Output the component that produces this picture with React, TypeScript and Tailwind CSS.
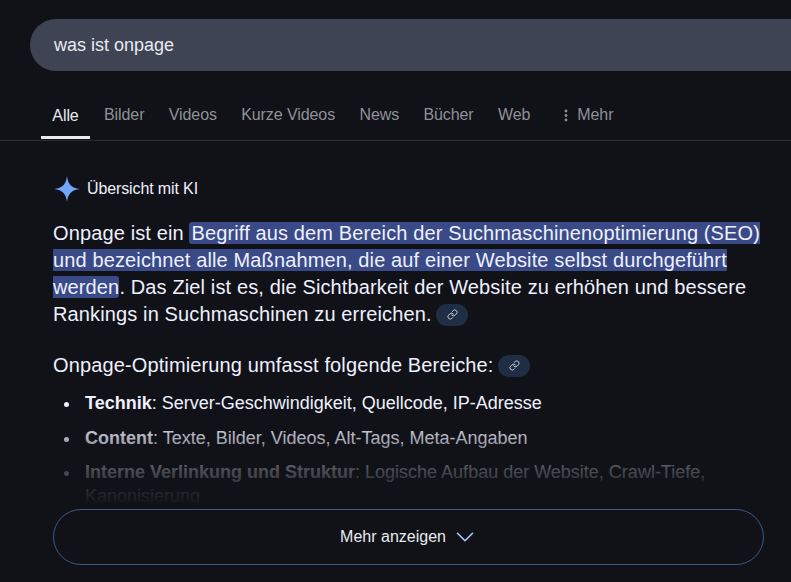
import { ChevronDown, Link } from "lucide-react";

const tabs = ["Bilder", "Videos", "Kurze Videos", "News", "Bücher", "Web"];

const bullets = [
  { title: "Technik", text: "Server-Geschwindigkeit, Quellcode, IP-Adresse" },
  { title: "Content", text: "Texte, Bilder, Videos, Alt-Tags, Meta-Angaben" },
  { title: "Interne Verlinkung und Struktur", text: "Logische Aufbau der Website, Crawl-Tiefe, Kanonisierung" },
];

// kleines Link-Badge hinter den Absätzen
function LinkChip() {
  return (
    <span className="inline-flex items-center justify-center w-[32px] h-[22px] rounded-full bg-[#1f2e44] align-[1px] ml-[-1px]">
      <Link size={11} strokeWidth={2} className="text-[#d5d9e0]" />
    </span>
  );
}

export default function App() {
  return (
    <div className="relative w-[791px] h-[582px] overflow-hidden bg-[#111218] text-[#eef0ff] font-['Liberation_Sans',Arial,sans-serif]">
      {/* Suchleiste */}
      <div className="pt-[19px] pl-[30px]">
        <div className="h-[52px] rounded-l-[26px] bg-[#3f4454] flex items-center pl-[24px] text-[18px] text-[#e8eaed]">
          was ist onpage
        </div>
      </div>

      {/* Tabs */}
      <div className="mt-[22px] h-[48px] pl-[41px] flex items-start border-b border-[#2d2e33] text-[16px] tracking-[-0.08px] text-[#8f9197]">
        <div className="relative w-[49px] h-[47px] pt-[11px] text-center text-[#e8eaed]">
          Alle
          <span className="absolute left-0 right-0 bottom-[1px] h-[3px] bg-[#e8eaed]"></span>
        </div>
        <div className="flex gap-[24.3px] pl-[14px] pt-[10px]">
          {tabs.map((t) => (
            <span key={t}>{t}</span>
          ))}
        </div>
        <div className="flex items-center gap-[9px] pl-[34px] pt-[10px]">
          <svg width="4" height="14" viewBox="0 0 4 14" className="text-[#8f9197]">
            <circle cx="2" cy="3" r="1.4" fill="currentColor" />
            <circle cx="2" cy="7.5" r="1.4" fill="currentColor" />
            <circle cx="2" cy="12" r="1.4" fill="currentColor" />
          </svg>
          <span>Mehr</span>
        </div>
      </div>

      {/* KI Übersicht */}
      <div className="relative pl-[53px] pr-[28px]">
        <div className="flex items-center gap-[6px] pt-[34px] h-[62px] text-[16px] tracking-[-0.12px]">
          <svg width="28" height="28" viewBox="0 0 28 28">
            <path d="M14 1 C15 9 18 13 27 14 C18 15 15 19 14 27 C13 19 10 15 1 14 C10 13 13 9 14 1 Z" fill="#6ea8fe" />
          </svg>
          <span>Übersicht mit KI</span>
        </div>

        <p className="mt-[17px] text-[20px] leading-[27px] tracking-[0.13px]">
          Onpage ist ein{" "}
          <mark className="bg-[#394a86] text-[#eef0ff] rounded-[3px] pl-[2px]">
            Begriff aus dem Bereich der Suchmaschinenoptimierung (SEO) und bezeichnet alle Maßnahmen, die auf einer Website selbst durchgeführt werden
          </mark>
          . Das Ziel ist es, die Sichtbarkeit der Website zu erhöhen und bessere Rankings in Suchmaschinen zu erreichen. <LinkChip />
        </p>

        <p className="mt-[24px] text-[20px] leading-[27px] tracking-[0.13px]">
          Onpage-Optimierung umfasst folgende Bereiche: <LinkChip />
        </p>

        <ul className="mt-[12px] pl-[10.5px] text-[18px] leading-[24px] space-y-[10.5px]">
          {bullets.map((b) => (
            <li key={b.title} className="flex">
              <span className="shrink-0 w-[5px] h-[5px] mt-[11px] mr-[16.5px] rounded-full bg-[#eef0ff]"></span>
              <div>
                <b>{b.title}</b>: {b.text}
              </div>
            </li>
          ))}
        </ul>

        {/* Ausblendung über der Liste */}
        <div className="absolute left-0 right-0 top-[261px] h-[107px] bg-gradient-to-b from-transparent from-[15px] via-[#111218bf] via-[69px] to-[#111218] to-[104px]"></div>
      </div>
      <div className="absolute left-[53px] top-[509px] w-[711px] h-[56px] pl-[3px] rounded-full border border-[#3f5a85] bg-[#111218] flex items-center justify-center gap-[4px] text-[16px] text-[#e8eaed]">
        Mehr anzeigen
        <ChevronDown size={30} strokeWidth={1.3} className="text-[#a8c7fa]" />
      </div>
    </div>
  );
}
